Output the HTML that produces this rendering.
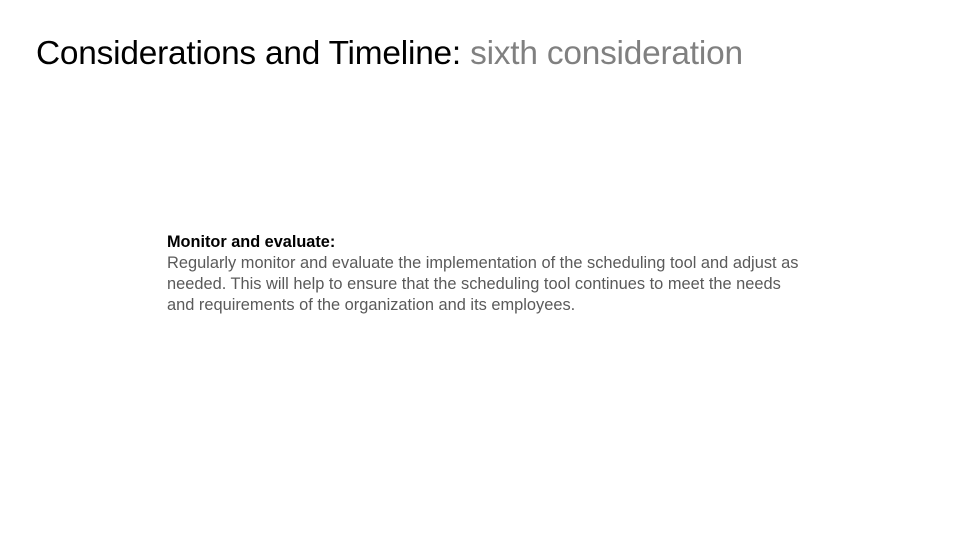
<!DOCTYPE html>
<html><head><meta charset="utf-8"><style>
html,body{margin:0;padding:0;background:#fff;width:960px;height:540px;overflow:hidden;font-family:"Liberation Sans",sans-serif;}
.t{position:absolute;left:36px;top:35px;font-size:33.4px;color:#000;white-space:nowrap;letter-spacing:-0.2px;}
.t span{color:#808080;}
.b{position:absolute;left:167px;top:232px;font-size:16.4px;line-height:21px;color:#5a5a5a;white-space:nowrap;}
.b b{color:#000;font-weight:bold;font-size:16.3px;}
</style></head><body>
<div class="t">Considerations and Timeline: <span>sixth consideration</span></div>
<div class="b"><b>Monitor and evaluate:</b><br>Regularly monitor and evaluate the implementation of the scheduling tool and adjust as<br>needed. This will help to ensure that the scheduling tool continues to meet the needs<br>and requirements of the organization and its employees.</div>
</body></html>
